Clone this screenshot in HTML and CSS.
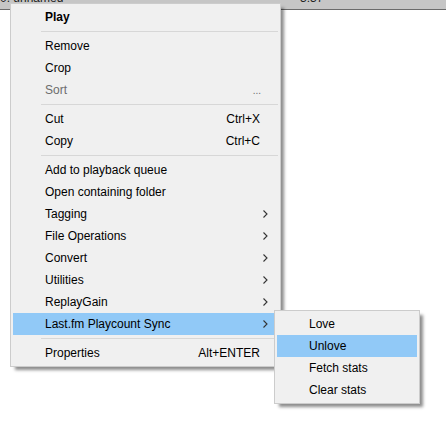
FILE: index.html
```html
<!DOCTYPE html>
<html>
<head>
<meta charset="utf-8">
<link rel="stylesheet" href="styles.css">
</head>
<body>
<div class="list">
  <div class="header">
    <span class="col-title">0. unnamed</span>
    <span class="col-time">3:37</span>
  </div>
</div>

<div class="menu main-menu">
  <div class="item bold"><span class="label">Play</span></div>
  <div class="sep"></div>
  <div class="item"><span class="label">Remove</span></div>
  <div class="item"><span class="label">Crop</span></div>
  <div class="item disabled"><span class="label">Sort</span><span class="key dots">...</span></div>
  <div class="sep"></div>
  <div class="item"><span class="label">Cut</span><span class="key">Ctrl+X</span></div>
  <div class="item"><span class="label">Copy</span><span class="key">Ctrl+C</span></div>
  <div class="sep"></div>
  <div class="item"><span class="label">Add to playback queue</span></div>
  <div class="item"><span class="label">Open containing folder</span></div>
  <div class="item sub"><span class="label">Tagging</span><svg class="arrow" width="5" height="8" viewBox="0 0 5 8"><path d="M0.5 0.5 L4 4 L0.5 7.5" fill="none" stroke="#333" stroke-width="1.1"/></svg></div>
  <div class="item sub"><span class="label">File Operations</span><svg class="arrow" width="5" height="8" viewBox="0 0 5 8"><path d="M0.5 0.5 L4 4 L0.5 7.5" fill="none" stroke="#333" stroke-width="1.1"/></svg></div>
  <div class="item sub"><span class="label">Convert</span><svg class="arrow" width="5" height="8" viewBox="0 0 5 8"><path d="M0.5 0.5 L4 4 L0.5 7.5" fill="none" stroke="#333" stroke-width="1.1"/></svg></div>
  <div class="item sub"><span class="label">Utilities</span><svg class="arrow" width="5" height="8" viewBox="0 0 5 8"><path d="M0.5 0.5 L4 4 L0.5 7.5" fill="none" stroke="#333" stroke-width="1.1"/></svg></div>
  <div class="item sub"><span class="label">ReplayGain</span><svg class="arrow" width="5" height="8" viewBox="0 0 5 8"><path d="M0.5 0.5 L4 4 L0.5 7.5" fill="none" stroke="#333" stroke-width="1.1"/></svg></div>
  <div class="item sub active"><span class="label">Last.fm Playcount Sync</span><svg class="arrow" width="5" height="8" viewBox="0 0 5 8"><path d="M0.5 0.5 L4 4 L0.5 7.5" fill="none" stroke="#333" stroke-width="1.1"/></svg></div>
  <div class="sep"></div>
  <div class="item"><span class="label">Properties</span><span class="key">Alt+ENTER</span></div>
</div>

<div class="menu sub-menu">
  <div class="item"><span class="label">Love</span></div>
  <div class="item active"><span class="label">Unlove</span></div>
  <div class="item"><span class="label">Fetch stats</span></div>
  <div class="item"><span class="label">Clear stats</span></div>
</div>
</body>
</html>
```

FILE: styles.css
```css
html, body {
  margin: 0;
  padding: 0;
  background: #ffffff;
  width: 446px;
  height: 422px;
  overflow: hidden;
  font-family: "Liberation Sans", Arial, sans-serif;
  font-size: 12px;
  color: #000;
}

.list {
  position: relative;
}

.header {
  height: 9px;
  background: #c6c6c6;
  border-bottom: 1px solid #6b6b6b;
  overflow: hidden;
  position: relative;
  font-size: 12px;
  color: #222;
}

.header span {
  position: absolute;
  top: -10px;
  line-height: 16px;
}

.col-title { left: 0; }
.col-time { left: 300px; }

.menu {
  position: absolute;
  background: #f0f0f0;
  border: 1px solid #cccccc;
  padding: 2px;
  box-shadow: 4px 4px 3px -1px rgba(0, 0, 0, 0.45);
}

.main-menu {
  left: 10px;
  top: 3px;
  width: 265px;
}

.sub-menu {
  left: 274px;
  top: 310px;
  width: 140px;
}

.item {
  height: 22px;
  display: flex;
  align-items: center;
  padding-left: 32px;
  padding-right: 18px;
  position: relative;
  white-space: nowrap;
}

.item .label {
  flex: 1;
}

.item .key {
  text-align: right;
}

.item.bold .label {
  font-weight: bold;
}

.item.disabled {
  color: #6d6d6d;
}

.dots {
  margin-right: -1px;
  font-size: 10px;
}

.item.active {
  background: #91c9f7;
}

.arrow {
  position: absolute;
  right: 10px;
  top: 7px;
}

.sep {
  height: 7px;
  position: relative;
}

.sep::after {
  content: "";
  position: absolute;
  left: 28px;
  right: 0;
  top: 3px;
  height: 1px;
  background: #d7d7d7;
}
```
